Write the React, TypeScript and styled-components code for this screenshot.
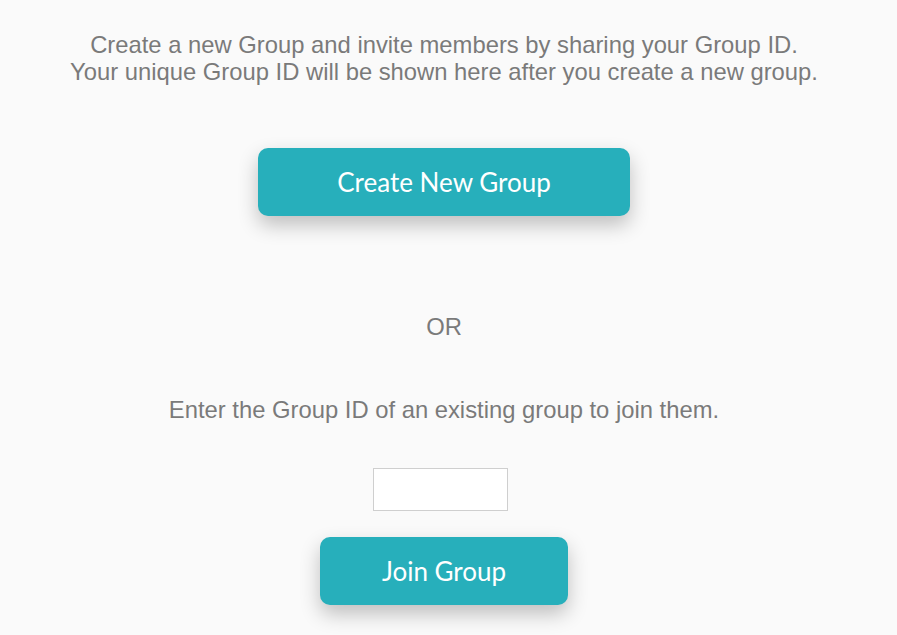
import React from "react";
import styled, { createGlobalStyle } from "styled-components";

const Global = createGlobalStyle`
  html, body { margin: 0; padding: 0; background: #fafafa; }
  body { font-family: "Liberation Sans", Arial, sans-serif; }
`;

const Page = styled.main`
  width: 888px;
  min-height: 635px;
  display: flex;
  flex-direction: column;
  align-items: center;
  padding-top: 31px;
  box-sizing: border-box;
`;

const Intro = styled.p`
  margin: 0;
  font-size: 23.8px;
  line-height: 27px;
  color: #7a7a7a;
  text-align: center;
  white-space: nowrap;
`;

const ActionButton = styled.button<{ $w: number }>`
  width: ${(p) => p.$w}px;
  height: 68px;
  border: none;
  border-radius: 10px;
  background: #27afbb;
  color: #fff;
  font-family: Lato, "Liberation Sans", sans-serif;
  font-size: 26px;
  box-shadow: 0 9px 20px rgba(0, 0, 0, 0.24);
  cursor: pointer;
`;

const Or = styled.div`
  margin-top: 99px;
  font-size: 23.8px;
  line-height: 24px;
  color: #7a7a7a;
`;

const Hint = styled.p`
  margin: 59px 0 0;
  font-size: 23.8px;
  line-height: 24px;
  color: #7a7a7a;
  white-space: nowrap;
`;

const IdInput = styled.input`
  margin-top: 46px;
  width: 135px;
  height: 43px;
  box-sizing: border-box;
  border: 1px solid #cfcfcf;
  background: #fff;
  margin-right: 7px;
`;

export default function App() {
  return (
    <>
      <Global />
      <Page>
        <Intro>
          Create a new Group and invite members by sharing your Group ID.
          <br />
          Your unique Group ID will be shown here after you create a new group.
        </Intro>
        <ActionButton $w={372} style={{ marginTop: 63 }}>Create New Group</ActionButton>
        <Or>OR</Or>
        <Hint>Enter the Group ID of an existing group to join them.</Hint>
        <IdInput type="text" />
        <ActionButton $w={248} style={{ marginTop: 26 }}>Join Group</ActionButton>
      </Page>
    </>
  );
}
